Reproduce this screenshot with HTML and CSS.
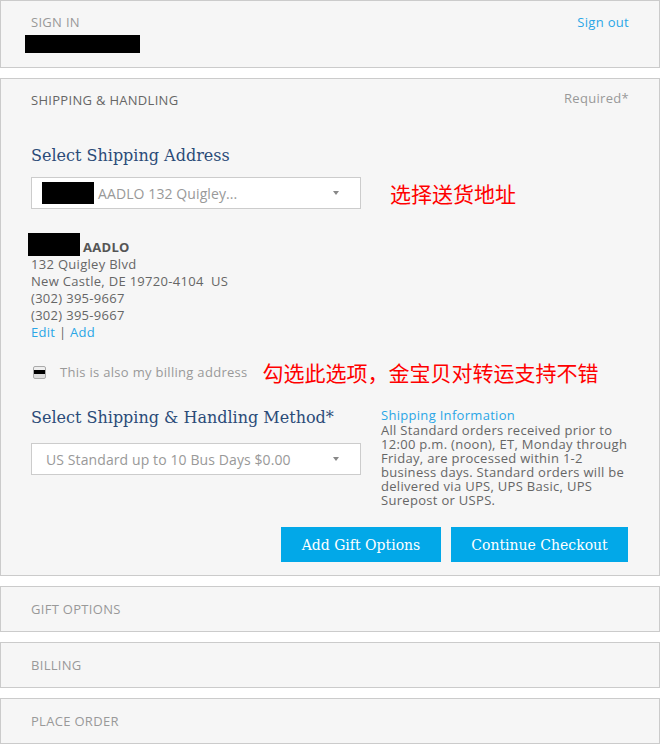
FILE: index.html
```html
<!DOCTYPE html>
<html lang="en">
<head>
    <meta charset="UTF-8">
    <meta name="viewport" content="width=device-width, initial-scale=1.0">
    <title>Checkout</title>
    <link rel="stylesheet" href="styles.css">
</head>
<body>
    <!-- Sign in -->
    <div class="panel signin">
        <div class="panel-head">
            <span class="panel-title light">Sign in</span>
            <a class="link" href="#">Sign out</a>
        </div>
        <div class="redact redact-name"></div>
    </div>

    <!-- Shipping & handling -->
    <div class="panel shipping">
        <div class="panel-head">
            <span class="panel-title">Shipping &amp; Handling</span>
            <span class="required">Required*</span>
        </div>

        <h2 class="section-title">Select Shipping Address</h2>
        <div class="select-row">
            <div class="select">
                <span class="redact redact-select"></span>
                <span class="select-text">AADLO 132 Quigley...</span>
                <span class="caret"></span>
            </div>
            <span class="note">选择送货地址</span>
        </div>

        <div class="address">
            <div class="address-name">
                <span class="redact redact-addr"></span>
                <b>AADLO</b>
            </div>
            <div>132 Quigley Blvd</div>
            <div>New Castle, DE 19720-4104&nbsp; US</div>
            <div>(302) 395-9667</div>
            <div>(302) 395-9667</div>
            <div><a class="link" href="#">Edit</a> | <a class="link" href="#">Add</a></div>
        </div>

        <label class="billing">
            <span class="checkbox"></span>
            <span class="billing-text">This is also my billing address</span>
            <span class="note">勾选此选项，金宝贝对转运支持不错</span>
        </label>

        <div class="method">
            <div class="method-left">
                <h2 class="section-title">Select Shipping &amp; Handling Method*</h2>
                <div class="select select-method">
                    <span class="select-text">US Standard up to 10 Bus Days $0.00</span>
                    <span class="caret"></span>
                </div>
            </div>
            <div class="method-info">
                <a class="link info-link" href="#">Shipping Information</a>
                <p>All Standard orders received prior to 12:00 p.m. (noon), ET, Monday through Friday, are processed within 1-2 business days. Standard orders will be delivered via UPS, UPS Basic, UPS Surepost or USPS.</p>
            </div>
        </div>

        <div class="actions">
            <button class="btn btn-gift">Add Gift Options</button>
            <button class="btn btn-continue">Continue Checkout</button>
        </div>
    </div>

    <div class="panel closed"><span class="panel-title light">Gift Options</span></div>
    <div class="panel closed"><span class="panel-title light">Billing</span></div>
    <div class="panel closed"><span class="panel-title light">Place Order</span></div>
</body>
</html>
```

FILE: styles.css
```css
body {
    margin: 0;
    padding: 0;
    background: #fff;
    font-family: "Open Sans", Arial, sans-serif;
    font-size: 13px;
    letter-spacing: 0.3px;
    color: #666;
}
.panel {
    width: 660px;
    background: #f6f6f6;
    border: 1px solid #cbcbcb;
    margin-bottom: 10px;
    padding: 13px 30px 14px 30px;
    box-sizing: border-box;
}
.panel-head {
    display: flex;
    justify-content: space-between;
    align-items: flex-start;
    line-height: 16px;
}
.panel-title {
    font-size: 13px;
    text-transform: uppercase;
    color: #666;
    line-height: 16px;
}
.panel-title.light {
    color: #999;
}
.link {
    color: #2aa6e6;
    text-decoration: none;
}
.required {
    color: #999;
    margin-top: -2px;
}
.redact {
    display: inline-block;
    background: #000;
}
.redact-name {
    display: block;
    width: 115px;
    height: 18px;
    margin: 5px 0 0 -6px;
}

/* shipping */
.shipping {
    padding-bottom: 13px;
}
.section-title {
    font-family: "DejaVu Serif", Georgia, serif;
    font-weight: normal;
    font-size: 16px;
    line-height: 22px;
    letter-spacing: 0;
    color: #2b4b78;
    margin: 0;
}
.shipping > .section-title {
    margin-top: 37px;
}
.select-row {
    display: flex;
    align-items: center;
    margin-top: 10px;
}
.select {
    width: 330px;
    height: 32px;
    box-sizing: border-box;
    background: #fff;
    border: 1px solid #ccc;
    display: flex;
    align-items: center;
    padding: 0 21px 0 10px;
    font-size: 14px;
    letter-spacing: 0.1px;
    color: #999;
}
.select-text {
    flex: 1;
}
.redact-select {
    width: 52px;
    height: 22px;
    margin-right: 4px;
}
.caret {
    width: 0;
    height: 0;
    border-left: 3px solid transparent;
    border-right: 3px solid transparent;
    border-top: 4px solid #888;
}
.note {
    font-family: "Noto Sans CJK SC", sans-serif;
    font-size: 21px;
    letter-spacing: 0;
    color: #f00;
    line-height: 28px;
}
.select-row .note {
    margin-left: 29px;
}
.address {
    margin-top: 24px;
    line-height: 17px;
}
.address-name {
    display: flex;
    align-items: flex-end;
}
.address-name b {
    color: #555;
}
.redact-addr {
    width: 52px;
    height: 23px;
    margin: 0 3px 0 -3px;
}
.billing {
    display: flex;
    align-items: center;
    margin-top: 17px;
    line-height: 28px;
}
.checkbox {
    width: 11px;
    height: 11px;
    border: 1px solid #aaa;
    border-radius: 2px;
    margin-left: 2px;
    background: linear-gradient(#eee 0, #eee 3px, #000 3px, #000 7px, #ddd 7px);
}
.billing-text {
    color: #999;
    margin-left: 14px;
}
.billing .note {
    margin-left: 15px;
}
.method {
    display: flex;
    gap: 20px;
    margin-top: 21px;
}
.method-left {
    width: 330px;
}
.select-method {
    margin-top: 14px;
    padding-left: 14px;
}
.method-info {
    width: 250px;
    line-height: 14px;
}
.info-link {
    display: block;
    line-height: 16px;
}
.method-info p {
    margin: 0;
}
.actions {
    display: flex;
    justify-content: flex-end;
    gap: 10px;
    margin-top: 20px;
    padding-right: 1px;
}
.btn {
    background: #02a8e8;
    color: #fff;
    border: none;
    height: 35px;
    font-family: "DejaVu Serif", Georgia, serif;
    font-size: 14px;
    padding: 0;
    cursor: pointer;
}
.btn-gift {
    width: 160px;
}
.btn-continue {
    width: 177px;
}
.closed {
    padding: 14px 30px 14px 30px;
    line-height: 16px;
}
```
